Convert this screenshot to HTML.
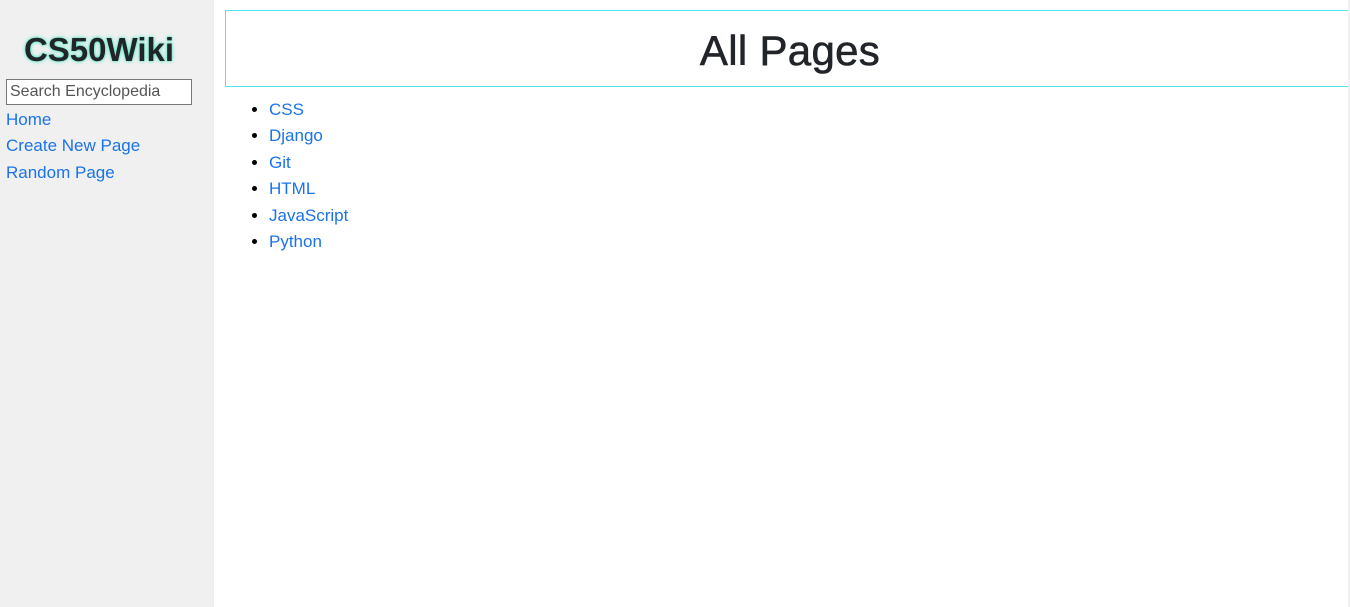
<!DOCTYPE html>
<html><head><style>
body{margin:0;width:1350px;height:607px;overflow:hidden;font-family:"Liberation Sans",sans-serif;background:#fff;position:relative}
.side{position:absolute;left:0;top:0;width:214px;height:607px;background:#f0f0f0}
.side h2{position:absolute;left:0;width:198px;top:30px;margin:0;text-align:center;font-size:33px;font-weight:bold;color:#212529;line-height:40px;text-shadow:0 0 4px #5fe8c8,0 0 2px #5fe8c8}
.side input{position:absolute;left:6px;top:79px;width:178px;height:24px;border:1px solid #767676;padding:0 3px;font:16px "Liberation Sans",sans-serif;color:#555;background:#fff;box-sizing:content-box}
.side a{position:absolute;left:6px;color:#1a73e8;text-decoration:none;font-size:17px}
.box{position:absolute;left:225px;top:10px;width:1140px;height:75px;border:1px solid #4ee8ec}
.box h1{margin:0;position:absolute;left:0;width:1128px;top:16px;text-align:center;font-size:42px;font-weight:normal;color:#212529;line-height:48px;letter-spacing:0.3px;-webkit-text-stroke:0.6px #212529}
ul{position:absolute;left:229px;top:97px;margin:0;padding-left:40px;font-size:17px;line-height:26.4px}
ul a{color:#1a73e8;text-decoration:none}
.sb{position:absolute;right:0;top:0;width:2px;height:607px;background:#f0f0f0}
</style></head><body>
<div class="side">
<h2>CS50Wiki</h2>
<input placeholder="Search Encyclopedia" value="Search Encyclopedia">
<a style="top:110px">Home</a>
<a style="top:136px">Create New Page</a>
<a style="top:163px">Random Page</a>
</div>
<div class="box"><h1>All Pages</h1></div>
<ul>
<li><a>CSS</a></li><li><a>Django</a></li><li><a>Git</a></li><li><a>HTML</a></li><li><a>JavaScript</a></li><li><a>Python</a></li>
</ul>
<div class="sb"></div>
</body></html>
